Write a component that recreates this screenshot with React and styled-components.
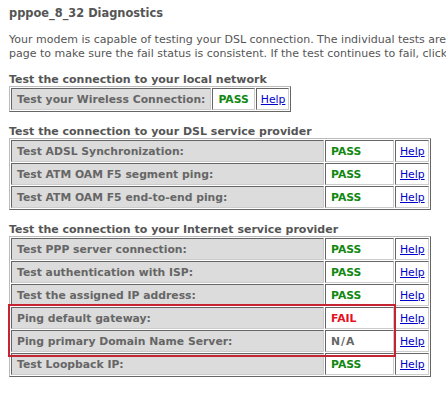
import React from "react";
import styled, { createGlobalStyle } from "styled-components";

const GlobalStyle = createGlobalStyle`
  body {
    margin: 0;
    background: #fff;
    font-family: "DejaVu Sans", Tahoma, Verdana, sans-serif;
    color: #555;
    overflow: hidden;
  }
`;

const sections = [
  {
    title: "Test the connection to your local network",
    compact: true,
    rows: [{ label: "Test your Wireless Connection:", status: "PASS" }],
  },
  {
    title: "Test the connection to your DSL service provider",
    rows: [
      { label: "Test ADSL Synchronization:", status: "PASS" },
      { label: "Test ATM OAM F5 segment ping:", status: "PASS" },
      { label: "Test ATM OAM F5 end-to-end ping:", status: "PASS" },
    ],
  },
  {
    title: "Test the connection to your Internet service provider",
    highlight: [3, 4],
    rows: [
      { label: "Test PPP server connection:", status: "PASS" },
      { label: "Test authentication with ISP:", status: "PASS" },
      { label: "Test the assigned IP address:", status: "PASS" },
      { label: "Ping default gateway:", status: "FAIL" },
      { label: "Ping primary Domain Name Server:", status: "N/A" },
      { label: "Test Loopback IP:", status: "PASS" },
    ],
  },
];

const ROW = 23.3;

const App = () => {
  return (
    <Page>
      <GlobalStyle />
      <Title>pppoe_8_32 Diagnostics</Title>
      <Intro>
        Your modem is capable of testing your DSL connection. The individual tests are listed below. If a test displays a fail status, click "Rerun Diagnostic Tests" at the bottom of this
        <br />
        page to make sure the fail status is consistent. If the test continues to fail, click "Help" and follow the troubleshooting procedures.
      </Intro>
      {sections.map((s) => (
        <Section key={s.title}>
          <Heading>{s.title}</Heading>
          <TableWrap>
            <Table $compact={s.compact}>
              <tbody>
                {s.rows.map((r) => (
                  <tr key={r.label}>
                    <Label $compact={s.compact}>{r.label}</Label>
                    <Status $status={r.status} $compact={s.compact}>
                      {r.status}
                    </Status>
                    <HelpCell>
                      <a href="#">Help</a>
                    </HelpCell>
                  </tr>
                ))}
              </tbody>
            </Table>
            {s.highlight && (
              <Highlight
                style={{
                  top: 2 + s.highlight[0] * ROW - 4,
                  height: (s.highlight[1] - s.highlight[0] + 1) * ROW + 3,
                }}
              />
            )}
          </TableWrap>
        </Section>
      ))}
    </Page>
  );
};

const Page = styled.div`
  padding: 5px 0 0 9px;
  width: 437px;
  overflow: hidden;
`;

const Title = styled.h1`
  margin: 0;
  font-size: 11.4px;
  font-weight: bold;
  color: #555;
  line-height: 16px;
`;

const Intro = styled.p`
  margin: 12px 0 0;
  font-size: 11px;
  line-height: 14px;
  white-space: nowrap;
  color: #555;
`;

const Section = styled.div`
  margin-top: 12px;
  & + & {
    margin-top: 9px;
  }
`;

const Heading = styled.div`
  font-size: 11px;
  font-weight: bold;
  color: #555;
  line-height: 13px;
`;

const TableWrap = styled.div`
  position: relative;
  display: inline-block;
`;

const Table = styled.table`
  border-collapse: separate;
  border-spacing: 1px;
  border: 1px solid;
  border-color: #bbb #666 #666 #bbb;
  width: ${(p) => (p.$compact ? "auto" : "422px")};
  table-layout: ${(p) => (p.$compact ? "auto" : "fixed")};
  font-size: 10.8px;
  font-weight: bold;
  td {
    box-sizing: border-box;
    border: 1px solid;
    border-color: #666 #ccc #ccc #666;
    height: 22px;
    padding: 0 5px;
    white-space: nowrap;
  }
`;

const Label = styled.td`
  background: #dcdcdc;
  color: #666;
  width: ${(p) => (p.$compact ? "auto" : "313px")};
`;

const statusColor = { PASS: "#118811", FAIL: "#e8111c", "N/A": "#666" };

const Status = styled.td`
  background: #fff;
  color: ${(p) => statusColor[p.$status]};
  width: ${(p) => (p.$compact ? "auto" : "69px")};
  letter-spacing: ${(p) => (p.$status === "N/A" ? "1px" : "0")};
`;

const HelpCell = styled.td`
  background: #fff;
  font-weight: normal;
  && {
    padding: 0 3px 0 4px;
  }
  a {
    color: #0000cc;
    text-decoration: underline;
  }
`;

const Highlight = styled.div`
  position: absolute;
  left: -1px;
  width: 384px;
  border: 2px solid #c42530;
  pointer-events: none;
`;

export default App;
